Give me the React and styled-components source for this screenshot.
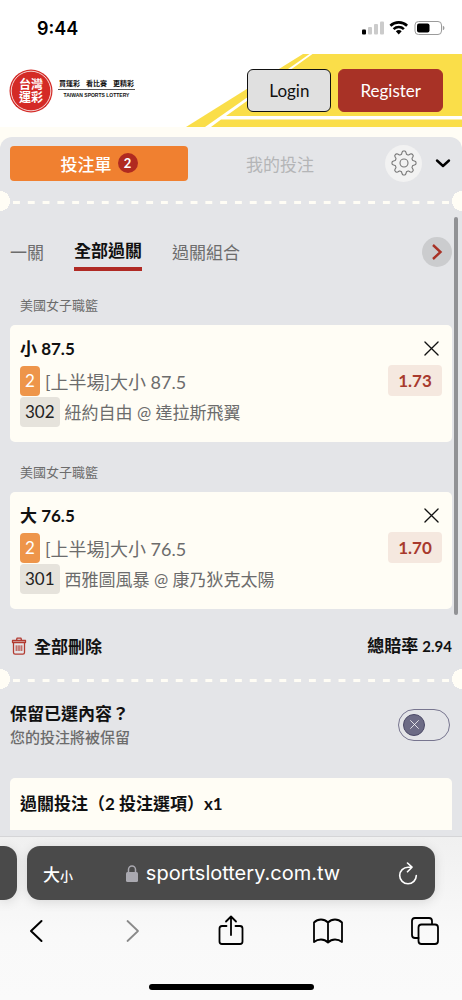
import React, { useState } from 'react';
import styled, { createGlobalStyle } from 'styled-components';

const COLORS = {
  cream: '#fffdf5',
  panel: '#e4e5e8',
  orange: '#f08030',
  red: '#a83226',
  yellow: '#fade49',
  grey: '#6c6c6c',
};

const BETS = [
  { id: 302, league: '美國女子職籃', pick: '小 87.5', market: '[上半場]大小 87.5', match: '紐約自由 @ 達拉斯飛翼', odds: '1.73' },
  { id: 301, league: '美國女子職籃', pick: '大 76.5', market: '[上半場]大小 76.5', match: '西雅圖風暴 @ 康乃狄克太陽', odds: '1.70' },
];

const gearPath = () => {
  const points = [];
  for (let i = 0; i < 96; i += 1) {
    const angle = (i / 96) * Math.PI * 2;
    const wave = Math.max(-1, Math.min(1, Math.cos(angle * 8) * 1.6));
    const radius = 10.5 + wave * 1.5;
    points.push(`${(13 + radius * Math.sin(angle)).toFixed(2)} ${(13 - radius * Math.cos(angle)).toFixed(2)}`);
  }
  return `M${points.join('L')}Z`;
};

const navStroke = {
  fill: 'none',
  stroke: '#000',
  strokeWidth: 1.8,
  strokeLinecap: 'round',
  strokeLinejoin: 'round',
};

function StatusIcons() {
  return (
    <svg width="83" height="16" viewBox="0 0 83 16" aria-hidden="true">
      <rect x="0" y="9.500" width="4" height="5" rx="1" />
      <g fill="#cbcbcb">
        <rect x="6" y="7" width="4" height="7.500" rx="1" />
        <rect x="12" y="4" width="4" height="10.500" rx="1" />
        <rect x="18" y="1.500" width="4" height="13" rx="1" />
      </g>
      <g fill="none" stroke="#000" strokeWidth="2.600">
        <path d="M28.400 5.800a12 12 0 0 1 16.700 0" />
        <path d="M31.600 9.100a7.500 7.500 0 0 1 10.300 0" />
      </g>
      <path d="M33.800 11.300a4.300 4.300 0 0 1 5.900 0L36.750 14.600z" />
      <rect x="53" y="1.500" width="26.500" height="13" rx="3.500" fill="none" stroke="#9b9b9b" />
      <rect x="55" y="3.500" width="12.500" height="9" rx="2" />
      <path d="M80.800 5.800v4.500q1.700-.6 1.700-2.250T80.800 5.800z" fill="#9b9b9b" />
    </svg>
  );
}

function Stripes() {
  return (
    <StripesSvg width="276" height="73" viewBox="0 0 276 73" aria-hidden="true">
      <g fill={COLORS.yellow}>
        <path d="M0 73L117 0H123.500L19 73Z" />
        <path d="M40 62L126.500 0H276V62Z" />
        <path d="M25 73L35 65.500H276V73Z" />
      </g>
    </StripesSvg>
  );
}

function LogoMark() {
  return (
    <svg width="44" height="44" viewBox="0 0 44 44" aria-hidden="true">
      <circle cx="22" cy="22" r="21.500" fill="#d42a26" />
      <circle cx="22" cy="22" r="19.800" fill="none" stroke="#fff" strokeWidth=".8" />
      <g fill="#fff" fontFamily="'Noto Sans CJK TC', sans-serif" fontSize="12" fontWeight="700" textAnchor="middle">
        <text x="22" y="20">台灣</text>
        <text x="22" y="33">運彩</text>
      </g>
    </svg>
  );
}

function CloseIcon({ size = 15 }) {
  return (
    <svg width={size} height={size} viewBox="0 0 16 16" fill="none" stroke="currentColor" strokeWidth="1.400" strokeLinecap="round" aria-hidden="true">
      <path d="M1 1l14 14M15 1L1 15" />
    </svg>
  );
}

function TrashIcon() {
  return (
    <svg width="16" height="18" viewBox="0 0 16 18" fill="none" stroke="#b23a30" strokeWidth="1.300" strokeLinejoin="round" aria-hidden="true">
      <path d="M1.500 3.500h13v2h-13zM5.500 3.500l.5-2.300h4l.5 2.300M2.500 5.500v10q0 1.700 1.600 1.700h7.800q1.600 0 1.600-1.700v-10" />
      <path d="M5.200 8.300v5.700M7.100 8.300v5.700M8.900 8.300v5.700M10.800 8.300v5.700" strokeWidth="1" />
    </svg>
  );
}

function Bet({ bet }) {
  return (
    <section>
      <League>{bet.league}</League>
      <Card>
        <CardRow>
          <Pick>{bet.pick}</Pick>
          <IconButton aria-label="移除"><CloseIcon /></IconButton>
        </CardRow>
        <CardRow>
          <Line>
            <Tag orange>2</Tag>
            <Market>{bet.market}</Market>
          </Line>
          <Odds>{bet.odds}</Odds>
        </CardRow>
        <Line>
          <Tag>{bet.id}</Tag>
          {bet.match}
        </Line>
      </Card>
    </section>
  );
}

export default function App() {
  const [keep, setKeep] = useState(false);

  return (
    <Page>
      <GlobalStyle />
      <StatusBar>
        <Clock>9:44</Clock>
        <StatusIcons />
      </StatusBar>
      <Header>
        <Stripes />
        <Brand href="#">
          <LogoMark />
          <BrandText>
            <Slogan><span>買運彩</span><span>看比賽</span><span>更精彩</span></Slogan>
            <BrandName>TAIWAN SPORTS LOTTERY</BrandName>
          </BrandText>
        </Brand>
        <Login>Login</Login>
        <Register>Register</Register>
      </Header>

      <Slip>
        <SlipTabs>
          <SlipTab active>投注單<Count>2</Count></SlipTab>
          <SlipTab>我的投注</SlipTab>
          <GearButton aria-label="設定">
            <svg width="26" height="26" viewBox="0 0 26 26" fill="none" stroke="#777" strokeWidth="1.100" aria-hidden="true">
              <path d={gearPath()} strokeLinejoin="round" />
              <circle cx="13" cy="13" r="4" />
            </svg>
          </GearButton>
          <IconButton aria-label="收合">
            <svg width="16" height="10" viewBox="0 0 16 10" fill="none" stroke="#000" strokeWidth="2.400" strokeLinecap="round" strokeLinejoin="round" aria-hidden="true">
              <path d="M2 2.500l6 5.500 6-5.500" />
            </svg>
          </IconButton>
        </SlipTabs>
        <Perforation />

        <Scroller>
          <ScrollThumb />
          <BetTypes>
            <BetType>一關</BetType>
            <BetType active>全部過關</BetType>
            <BetType>過關組合</BetType>
            <NextButton aria-label="下一個">
              <svg width="12" height="18" viewBox="0 0 12 18" fill="none" stroke={COLORS.red} strokeWidth="2.400" aria-hidden="true">
                <path d="M2 2l7.500 7L2 16" />
              </svg>
            </NextButton>
          </BetTypes>
          {BETS.map((bet) => (
            <Bet key={bet.id} bet={bet} />
          ))}
        </Scroller>

        <Summary>
          <DeleteAll><TrashIcon />全部刪除</DeleteAll>
          <Total>總賠率 <small>2.94</small></Total>
        </Summary>
        <Perforation />

        <KeepRow>
          <div>
            <KeepTitle>保留已選內容？</KeepTitle>
            <KeepHint>您的投注將被保留</KeepHint>
          </div>
          <Switch>
            <input type="checkbox" aria-label="保留已選內容" checked={keep} onChange={() => setKeep(!keep)} />
            <Knob on={keep ? 1 : 0}><CloseIcon size={9} /></Knob>
          </Switch>
        </KeepRow>
        <ParlayCard>過關投注（2 投注選項）x1</ParlayCard>
      </Slip>

      <Browser>
        <AddressRow>
          <PreviousTab />
          <Address>
            <TextSize aria-label="文字大小">大<small>小</small></TextSize>
            <Url>
              <svg width="12" height="17" viewBox="0 0 12 17" fill="#aaa9b0" aria-hidden="true">
                <rect x="0" y="7" width="12" height="10" rx="1.500" />
                <path d="M2.500 8V4.500a3.500 3.500 0 0 1 7 0V8" fill="none" stroke="#aaa9b0" strokeWidth="1.500" />
              </svg>
              sportslottery.com.tw
            </Url>
            <IconButton aria-label="重新載入">
              <svg width="20" height="23" viewBox="0 0 20 23" fill="none" stroke="#fff" strokeWidth="1.600" strokeLinecap="round" strokeLinejoin="round" aria-hidden="true">
                <path d="M14 5.200H10a8.300 8.300 0 1 0 8.300 8.300M9.500 1l4.500 4.200-4.500 4.600" />
              </svg>
            </IconButton>
          </Address>
        </AddressRow>
        <NavBar>
          <NavButton aria-label="上一頁">
            <svg width="14" height="24" viewBox="0 0 14 24" {...navStroke} strokeWidth="2"><path d="M12.500 2L2 12l10.500 10" /></svg>
          </NavButton>
          <NavButton aria-label="下一頁" disabled>
            <svg width="14" height="24" viewBox="0 0 14 24" {...navStroke} stroke="#8a8a8a"><path d="M1.500 2L12 12 1.500 22" /></svg>
          </NavButton>
          <NavButton aria-label="分享">
            <svg width="26" height="32" viewBox="0 0 26 32" {...navStroke}>
              <path d="M8.500 11H4q-2.500 0-2.500 2.500v13Q1.500 29 4 29h18q2.500 0 2.500-2.500v-13Q24.500 11 22 11h-4.500M13 20V2M8 6.500l5-5 5 5" />
            </svg>
          </NavButton>
          <NavButton aria-label="書籤">
            <svg width="30" height="26" viewBox="0 0 30 26" {...navStroke}>
              <path d="M15 4.500Q12 1.500 8 1.500T1 4.500V24q3-2.500 7-2.500t7 3q3-3 7-3t7 2.500V4.500q-3-3-7-3t-7 3zV24" />
            </svg>
          </NavButton>
          <NavButton aria-label="分頁">
            <svg width="28" height="28" viewBox="0 0 28 28" {...navStroke}>
              <path d="M7.500 21H4q-3 0-3-3V4q0-3 3-3h14q3 0 3 3v3" />
              <rect x="7.500" y="7.500" width="19.500" height="19.500" rx="3" />
            </svg>
          </NavButton>
        </NavBar>
        <HomeIndicator />
      </Browser>
    </Page>
  );
}

/******************** styled components ************************/

const GlobalStyle = createGlobalStyle`
  * { box-sizing: border-box; }
  body {
    margin: 0;
    background: #fff;
    font-family: Lato, 'Noto Sans CJK TC', sans-serif;
  }
  button {
    font: inherit;
    color: inherit;
    border: 0;
    padding: 0;
    background: none;
  }
  svg { display: block; flex: none; }
`;

const Page = styled.div`
  min-height: 100vh;
  display: flex;
  flex-direction: column;
  overflow: hidden;
  background: ${COLORS.cream};
  color: #111;
`;

const StatusBar = styled.div`
  height: 54px;
  padding: 2px 17px 0 37px;
  display: flex;
  align-items: center;
  justify-content: space-between;
  background: #fff;
`;

const Clock = styled.time`
  font: 600 18px Inter, sans-serif;
  color: #000;
`;

const Header = styled.header`
  position: relative;
  height: 73px;
  padding: 0 19px 0 9px;
  display: flex;
  align-items: center;
  gap: 7px;
  background: #fff;
  & > * { position: relative; }
`;

const StripesSvg = styled.svg`
  && { position: absolute; }
  right: 0;
  top: 0;
`;

const Brand = styled.a`
  display: flex;
  align-items: center;
  gap: 5px;
  margin-right: auto;
  color: #111;
  text-decoration: none;
`;

const BrandText = styled.span`
  width: 77px;
  padding-bottom: 3px;
  display: flex;
  flex-direction: column;
`;

const Slogan = styled.span`
  display: flex;
  justify-content: space-between;
  padding: 0 1px 1px;
  border-bottom: 1px solid #555;
  font-size: 7px;
  line-height: 10px;
  font-weight: 700;
`;

const BrandName = styled.span`
  padding-top: 1px;
  text-align: center;
  white-space: nowrap;
  font: 700 5px/9px 'Liberation Sans', sans-serif;
`;

const Login = styled.button`
  && {
    height: 43px;
    padding: 0 21px;
    border: 1px solid #111;
    border-radius: 6px;
    background: #e0e0e0;
    font-size: 17px;
  }
`;

const Register = styled(Login)`
  && {
    border-color: ${COLORS.red};
    background: ${COLORS.red};
    color: #fff;
  }
`;

const Slip = styled.main`
  flex: 1;
  margin-top: 10px;
  padding-bottom: 6px;
  border-radius: 12px 12px 0 0;
  background: ${COLORS.panel};
`;

const SlipTabs = styled.div`
  display: flex;
  align-items: center;
  gap: 3px;
  padding: 7px 11px 9px 10px;
  height: 54px;
`;

const SlipTab = styled.button`
  && {
    flex: 1;
    height: 35px;
    display: flex;
    align-items: center;
    justify-content: center;
    gap: 6px;
    border-radius: 4px;
    font-size: 17px;
    background: ${({ active }) => (active ? COLORS.orange : 'none')};
    color: ${({ active }) => (active ? '#fff' : '#b4b5b7')};
    font-weight: ${({ active }) => (active ? 500 : 400)};
  }
`;

const Count = styled.span`
  width: 20px;
  height: 20px;
  border-radius: 50%;
  background: #b02a20;
  text-align: center;
  font-size: 13px;
  line-height: 20px;
  font-weight: 700;
`;

const GearButton = styled.button`
  && {
    width: 37px;
    height: 37px;
    margin: 0 10px 0 13px;
    display: grid;
    place-items: center;
    border-radius: 50%;
    background: #f2f2f2;
  }
`;

const IconButton = styled.button`
  display: grid;
  place-items: center;
`;

/* ticket edge: dashed line between two half circles */
const Perforation = styled.div`
  height: 20px;
  padding: 10px 5px 0 13px;
  background:
    radial-gradient(circle at 0 50%, ${COLORS.cream} 10px, transparent 10px),
    radial-gradient(circle at 100% 50%, ${COLORS.cream} 10px, transparent 10px);
  &::after {
    content: '';
    display: block;
    height: 3px;
    background: linear-gradient(90deg, ${COLORS.cream} 50%, transparent 50%) 0 0 / 15px 3px round;
  }
`;

const Scroller = styled.div`
  position: relative;
  padding: 19px 10px 0;
`;

const ScrollThumb = styled.span`
  position: absolute;
  right: 4px;
  top: 6px;
  bottom: -6px;
  width: 4px;
  border-radius: 2px;
  background: #919295;
`;

const BetTypes = styled.nav`
  display: flex;
  align-items: center;
  gap: 30px;
  height: 44px;
  margin-bottom: 1px;
`;

const BetType = styled.button`
  && {
    height: 38px;
    padding-bottom: 2px;
    border-bottom: ${({ active }) => (active ? '4px solid #b02a24' : 0)};
    color: ${({ active }) => (active ? '#111' : COLORS.grey)};
    font-size: 17px;
    font-weight: ${({ active }) => (active ? 700 : 400)};
  }
`;

const NextButton = styled.button`
  && {
    width: 30px;
    height: 30px;
    margin-left: auto;
    display: grid;
    place-items: center;
    border-radius: 50%;
    background: #cbccce;
  }
`;

const League = styled.h2`
  margin: 0;
  padding: 20px 10px 10px;
  font-size: 13px;
  line-height: 20px;
  font-weight: 400;
  color: ${COLORS.grey};
`;

const Card = styled.article`
  padding: 7px 10px 15px;
  border-radius: 5px;
  background: ${COLORS.cream};
`;

const CardRow = styled.div`
  display: flex;
  align-items: center;
  justify-content: space-between;
  & > ${IconButton} { padding: 0 3px; }
`;

const Pick = styled.h3`
  margin: 0;
  font-size: 17px;
  line-height: 33px;
  font-weight: 700;
`;

const Line = styled.p`
  margin: 0;
  height: 31px;
  display: flex;
  align-items: center;
  gap: 5px;
  font-size: 17px;
  color: ${COLORS.grey};
`;

const Market = styled.span`
  font-size: 18px;
`;

const Tag = styled.span`
  padding: 0 5px;
  border-radius: 4px;
  line-height: 30px;
  background: ${({ orange }) => (orange ? '#ee954a' : '#e6e3dc')};
  color: ${({ orange }) => (orange ? '#fff' : '#222')};
`;

const Odds = styled.output`
  min-width: 54px;
  border-radius: 4px;
  background: #f5e8df;
  color: #a83a2d;
  text-align: center;
  font-size: 17px;
  line-height: 31px;
  font-weight: 700;
`;

const Summary = styled.div`
  display: flex;
  align-items: center;
  justify-content: space-between;
  padding: 24px 10px 10px 11px;
  line-height: 25px;
`;

const DeleteAll = styled.button`
  && {
    display: flex;
    align-items: center;
    gap: 7px;
    font-size: 17px;
    font-weight: 700;
  }
`;

const Total = styled.strong`
  font-size: 17px;
  small { font-size: 15px; }
`;

const KeepRow = styled.div`
  display: flex;
  align-items: center;
  justify-content: space-between;
  padding: 12px 12px 30px 10px;
`;

const KeepTitle = styled.div`
  font-size: 17px;
  line-height: 25px;
  font-weight: 700;
`;

const KeepHint = styled.div`
  font-size: 15px;
  line-height: 22px;
  font-weight: 500;
  color: ${COLORS.grey};
`;

const Switch = styled.label`
  position: relative;
  width: 52px;
  height: 32px;
  padding: 4px;
  border: 1px solid #77758f;
  border-radius: 16px;
  input {
    position: absolute;
    inset: 0;
    margin: 0;
    opacity: 0;
  }
`;

const Knob = styled.span`
  display: grid;
  place-items: center;
  width: 22px;
  height: 22px;
  margin-left: ${({ on }) => (on ? '20px' : 0)};
  border: 1px solid #4b4966;
  border-radius: 50%;
  background: #6c6b85;
  color: #fff;
`;

const ParlayCard = styled.div`
  margin: 0 10px;
  padding: 13px 10px;
  border-radius: 5px 5px 0 0;
  background: ${COLORS.cream};
  font-size: 17px;
  line-height: 26px;
  font-weight: 700;
`;

const Browser = styled.footer`
  border-top: 1px solid #d5d5d7;
  background: linear-gradient(#f0f0f0, #f9f9f9 60%, #fafafa);
`;

const AddressRow = styled.div`
  display: flex;
  gap: 10px;
  padding: 9px 27px 0 0;
`;

const PreviousTab = styled.div`
  width: 17px;
  border-radius: 0 13px 13px 0;
  background: #4a4a4a;
  box-shadow: 0 2px 12px rgba(0, 0, 0, 0.12);
`;

const Address = styled.div`
  flex: 1;
  height: 54px;
  padding: 0 17px 0 16px;
  display: flex;
  align-items: center;
  justify-content: space-between;
  border-radius: 13px;
  background: #4a4a4a;
  box-shadow: 0 2px 12px rgba(0, 0, 0, 0.12);
  color: #fff;
`;

const TextSize = styled.button`
  && { font-size: 17px; font-weight: 500; }
  small { font-size: 13px; }
`;

const Url = styled.span`
  display: flex;
  align-items: center;
  gap: 8px;
  margin-right: 5px;
  font: 400 20px Inter, sans-serif;
`;

const NavBar = styled.nav`
  display: flex;
  align-items: center;
  justify-content: space-between;
  height: 62px;
  padding: 0 22px 0 21px;
`;

const NavButton = styled(IconButton)`
  width: 30px;
`;

const HomeIndicator = styled.div`
  width: 165px;
  height: 6px;
  margin: 22px auto 10px;
  border-radius: 3px;
  background: #000;
`;
